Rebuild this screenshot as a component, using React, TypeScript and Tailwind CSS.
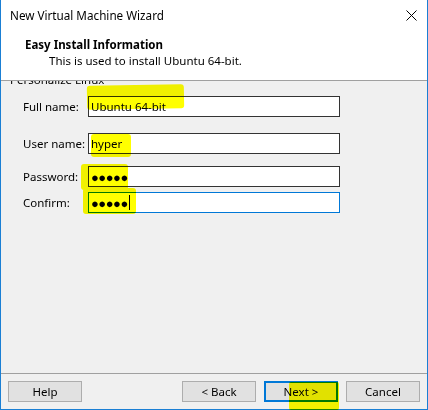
import React from "react"

const font = { fontFamily: '"Noto Sans", "Liberation Sans", sans-serif' }

function Highlight({ className }: { className: string }) {
  return <div className={`pointer-events-none absolute bg-[#ffff00] mix-blend-multiply ${className}`} />
}

function Field({ label, value, top, focused, password }: { label: string; value: string; top: string; focused?: boolean; password?: boolean }) {
  return (
    <div className={`flex items-center ${top}`}>
      <div className="w-[65px] text-[11.5px] text-black">{label}</div>
      <div
        className={`flex h-[21px] w-[252px] items-center bg-white px-[2px] text-[11.5px] ${
          focused ? "border border-[#0078d7]" : "border border-[#333333]"
        }`}
      >
        {password ? <span className="text-[13px] leading-[14px] tracking-[-0.5px]">●●●●●</span> : value}
        {focused && <span className="ml-[1px] h-[15px] w-px bg-black" />}
      </div>
    </div>
  )
}

function WinButton({ label, primary }: { label: string; primary?: boolean }) {
  return (
    <button
      className={`h-[21px] w-[74px] bg-[#e1e1e1] text-[11.5px] text-black ${
        primary ? "border-2 border-[#0078d7]" : "border border-[#adadad]"
      }`}
    >
      {label}
    </button>
  )
}

export default function App() {
  return (
    <div style={font} className="relative flex h-[410px] w-[428px] flex-col border-x border-b border-[#1a7fd4] bg-[#f0f0f0]">
      {/* title + header */}
      <div className="h-[81px] border-b border-[#a0a0a0] bg-white">
        <div className="flex h-[31px] items-center justify-between pl-[9px] pr-[9px]">
          <span className="text-[11.7px] text-black">New Virtual Machine Wizard</span>
          <svg width="11" height="11" viewBox="0 0 11 11" className="mr-[1px]">
            <path d="M0.5 0.5 L10.5 10.5 M10.5 0.5 L0.5 10.5" stroke="#000" strokeWidth="1" />
          </svg>
        </div>
        <div className="pl-[24px] pt-[6px] text-[11.5px] font-bold leading-[16px] text-black">Easy Install Information</div>
        <div className="pl-[48px] text-[11.5px] leading-[16px] text-black">This is used to install Ubuntu 64-bit.</div>
      </div>

      {/* body */}
      <div className="flex-1 overflow-hidden">
        <div className="-mt-[9px] pl-[9px] text-[11.5px] leading-[16px] text-black">Personalize Linux</div>
        <div className="pl-[22px]">
          <Field label="Full name:" value="Ubuntu 64-bit" top="mt-[8px]" />
          <Field label="User name:" value="hyper" top="mt-[16px]" />
          <Field label="Password:" value="" password top="mt-[12px]" />
          <Field label="Confirm:" value="" password focused top="mt-[5px]" />
        </div>
      </div>

      {/* footer */}
      <div className="border-t border-[#a0a0a0] pb-[7px] pt-[7px]">
        <div className="flex items-center pl-[7px] pr-[7px]">
          <WinButton label="Help" />
          <div className="flex-1" />
          <div className="flex gap-[8px]">
            <WinButton label="< Back" />
            <WinButton label="Next >" primary />
            <WinButton label="Cancel" />
          </div>
        </div>
      </div>

      {/* highlighter marks */}
      <Highlight className="left-[86px] top-[85px] h-[24px] w-[97px] rounded-[3px] -rotate-[1deg]" />
      <Highlight className="left-[90px] top-[134px] h-[23px] w-[40px] rounded-[3px]" />
      <Highlight className="left-[80px] top-[164px] h-[26px] w-[47px] rounded-[3px]" />
      <Highlight className="left-[82px] top-[188px] h-[26px] w-[53px] rounded-[3px]" />
      <Highlight className="left-[288px] top-[382px] h-[28px] w-[50px] rounded-[2px]" />
    </div>
  )
}
